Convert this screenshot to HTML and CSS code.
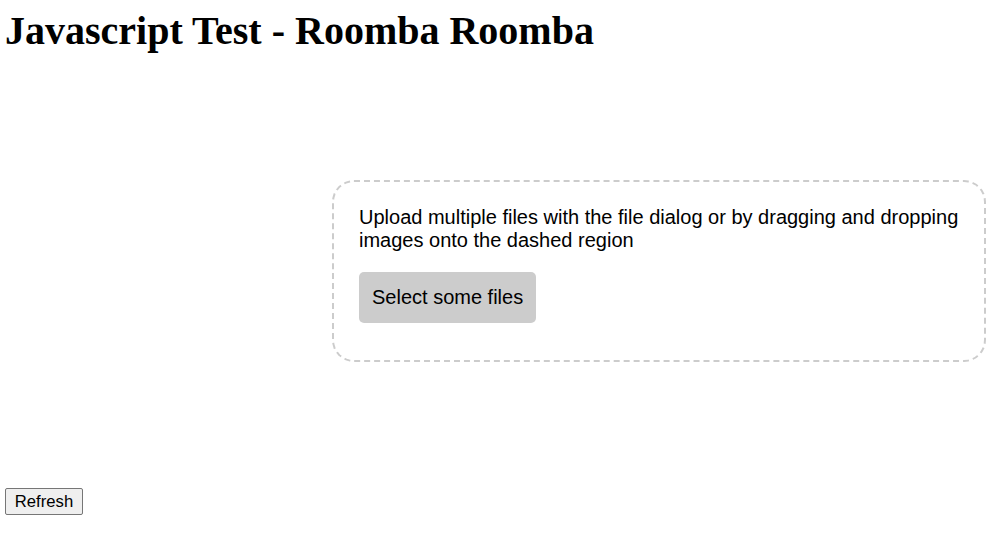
FILE: index.html
```html
<!DOCTYPE html>
<html>
<head>
<meta charset="utf-8">
<link rel="stylesheet" href="styles.css">
</head>
<body>
<h1 class="title">Javascript Test - Roomba Roomba</h1>
<div class="drop-area">
  <form class="my-form">
    <p class="intro">Upload multiple files with the file dialog or by dragging and dropping images onto the dashed region</p>
    <label class="button">Select some files</label>
  </form>
</div>
<button class="refresh">Refresh</button>
</body>
</html>
```
FILE: styles.css
```css
html, body {
  margin: 0;
  padding: 0;
  background: #fff;
}
body {
  padding: 0 5px;
  font-family: "Liberation Serif", serif;
}
.title {
  font-family: "Liberation Serif", serif;
  font-weight: bold;
  font-size: 40px;
  margin: 0;
  padding-top: 8px;
  line-height: 46px;
}
.drop-area {
  box-sizing: border-box;
  width: 654px;
  margin: 126px 0 0 auto;
  border: 2px dashed #ccc;
  border-radius: 22px;
  padding: 24px 25px 37px;
  font-family: "Liberation Sans", Arial, sans-serif;
}
.my-form { margin: 0; }
.intro {
  margin: 0 0 20px;
  font-size: 20px;
  line-height: 23px;
  color: #000;
}
.button {
  display: inline-block;
  padding: 0 13px;
  height: 51px;
  line-height: 51px;
  box-sizing: border-box;
  background: #ccc;
  border-radius: 5px;
  font-size: 20px;
  color: #000;
}
.refresh {
  display: block;
  margin-top: 126px;
  font-family: "Liberation Sans", Arial, sans-serif;
  font-size: 16.67px;
  height: 27px;
  width: 78px;
  padding: 0;
  background: #efefef;
  border: 1px solid #767676;
  border-radius: 2px;
  color: #000;
}
```
